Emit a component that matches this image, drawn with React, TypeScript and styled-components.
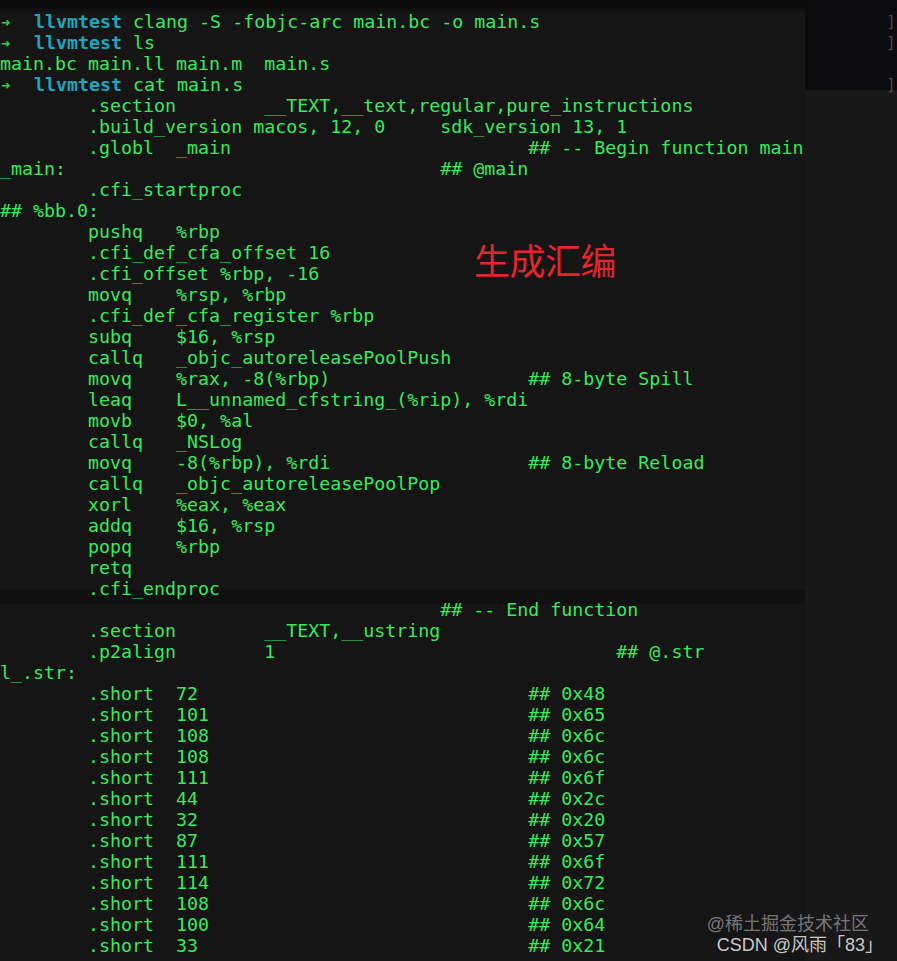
import styled, { createGlobalStyle } from "styled-components";

const GlobalStyle = createGlobalStyle`
  html, body {
    margin: 0;
    padding: 0;
    background: #151515;
  }
`;

const Terminal = styled.div`
  position: relative;
  width: 897px;
  height: 961px;
  overflow: hidden;
  box-sizing: border-box;
  padding-top: 10.5px;
  font-family: "DejaVu Sans Mono", "Liberation Mono", monospace;
  font-size: 18.3px;
  line-height: 21.02px;
  color: #38ea5d;
  /* the blurred page behind the translucent terminal */
  background:
    linear-gradient(#0c0c0e, #0c0c0e) 805px 0 / 92px 90px no-repeat,
    linear-gradient(#0b0b0b 0, #0b0b0b 6px, #151515 14px) 0 0 / 100% 20px no-repeat,
    linear-gradient(#101010 0, #101010 100%) 0 590px / 805px 14px no-repeat,
    linear-gradient(#181818, #181818) 805px 90px / 92px 871px no-repeat,
    #151515;
`;

const Line = styled.div`
  display: flex;
  justify-content: space-between;
  white-space: pre;
  height: 21.02px;
`;

const Arrow = styled.span`
  display: inline-block;
  width: 34px;
  padding-left: 1px;
  box-sizing: border-box;
  color: #2ccf47;
  font-weight: bold;
  font-size: 15px;
`;

const Dir = styled.span`
  color: #1fa6bd;
  font-weight: bold;
`;

const EdgeMark = styled.span`
  color: #4a4a4a;
  margin-right: 1px;
  font-size: 16px;
`;

const Note = styled.div`
  position: absolute;
  left: 474px;
  top: 236px;
  font-family: "Noto Sans CJK SC", sans-serif;
  font-size: 36px;
  line-height: 46px;
  color: #e3262b;
  letter-spacing: -0.5px;
`;

const Watermark = styled.div`
  position: absolute;
  right: 14px;
  bottom: 5px;
  display: flex;
  flex-direction: column;
  align-items: flex-end;
  font-family: "Liberation Sans", "Noto Sans CJK SC", sans-serif;
  font-size: 18px;
  line-height: 21px;
`;

const WmText = styled.span<{ $dim?: boolean }>`
  color: ${({ $dim }) => ($dim ? "rgba(255,255,255,0.42)" : "rgba(235,235,235,0.85)")};
  margin-right: ${({ $dim }) => ($dim ? "14px" : "0")};
`;

type Part = [number, string];

// pads each piece out to its tab column, as the terminal shows it
function row(parts: Part[]) {
  let s = "";
  for (const [col, text] of parts) {
    if (s.length < col) s += " ".repeat(col - s.length);
    else if (s.length > 0) s += " ";
    s += text;
  }
  return s;
}

const shorts: [string, string][] = [
  ["72", "0x48"],
  ["101", "0x65"],
  ["108", "0x6c"],
  ["108", "0x6c"],
  ["111", "0x6f"],
  ["44", "0x2c"],
  ["32", "0x20"],
  ["87", "0x57"],
  ["111", "0x6f"],
  ["114", "0x72"],
  ["108", "0x6c"],
  ["100", "0x64"],
  ["33", "0x21"],
];

const asm: string[] = [
  row([[8, ".section"], [24, "__TEXT,__text,regular,pure_instructions"]]),
  row([[8, ".build_version macos, 12, 0"], [40, "sdk_version 13, 1"]]),
  row([[8, ".globl"], [16, "_main"], [48, "## -- Begin function main"]]),
  row([[0, "_main:"], [40, "## @main"]]),
  row([[8, ".cfi_startproc"]]),
  "## %bb.0:",
  row([[8, "pushq"], [16, "%rbp"]]),
  row([[8, ".cfi_def_cfa_offset 16"]]),
  row([[8, ".cfi_offset %rbp, -16"]]),
  row([[8, "movq"], [16, "%rsp, %rbp"]]),
  row([[8, ".cfi_def_cfa_register %rbp"]]),
  row([[8, "subq"], [16, "$16, %rsp"]]),
  row([[8, "callq"], [16, "_objc_autoreleasePoolPush"]]),
  row([[8, "movq"], [16, "%rax, -8(%rbp)"], [48, "## 8-byte Spill"]]),
  row([[8, "leaq"], [16, "L__unnamed_cfstring_(%rip), %rdi"]]),
  row([[8, "movb"], [16, "$0, %al"]]),
  row([[8, "callq"], [16, "_NSLog"]]),
  row([[8, "movq"], [16, "-8(%rbp), %rdi"], [48, "## 8-byte Reload"]]),
  row([[8, "callq"], [16, "_objc_autoreleasePoolPop"]]),
  row([[8, "xorl"], [16, "%eax, %eax"]]),
  row([[8, "addq"], [16, "$16, %rsp"]]),
  row([[8, "popq"], [16, "%rbp"]]),
  row([[8, "retq"]]),
  row([[8, ".cfi_endproc"]]),
  row([[40, "## -- End function"]]),
  row([[8, ".section"], [24, "__TEXT,__ustring"]]),
  row([[8, ".p2align"], [24, "1"], [56, "## @.str"]]),
  "l_.str:",
  ...shorts.map(([n, hex]) => row([[8, ".short"], [16, n], [48, "## " + hex]])),
];

const Prompt = ({ cmd, mark }: { cmd: string; mark?: boolean }) => (
  <Line>
    <span>
      <Arrow>➜</Arrow>
      <Dir>llvmtest</Dir> {cmd}
    </span>
    {mark && <EdgeMark>]</EdgeMark>}
  </Line>
);

export default function App() {
  return (
    <>
      <GlobalStyle />
      <Terminal>
        <Prompt cmd="clang -S -fobjc-arc main.bc -o main.s" mark />
        <Prompt cmd="ls" mark />
        <Line>main.bc main.ll main.m  main.s</Line>
        <Prompt cmd="cat main.s" mark />
        {asm.map((l, i) => (
          <Line key={i}>{l}</Line>
        ))}
        <Note>生成汇编</Note>
        <Watermark>
          <WmText $dim>@稀土掘金技术社区</WmText>
          <WmText>CSDN @风雨「83」</WmText>
        </Watermark>
      </Terminal>
    </>
  );
}
